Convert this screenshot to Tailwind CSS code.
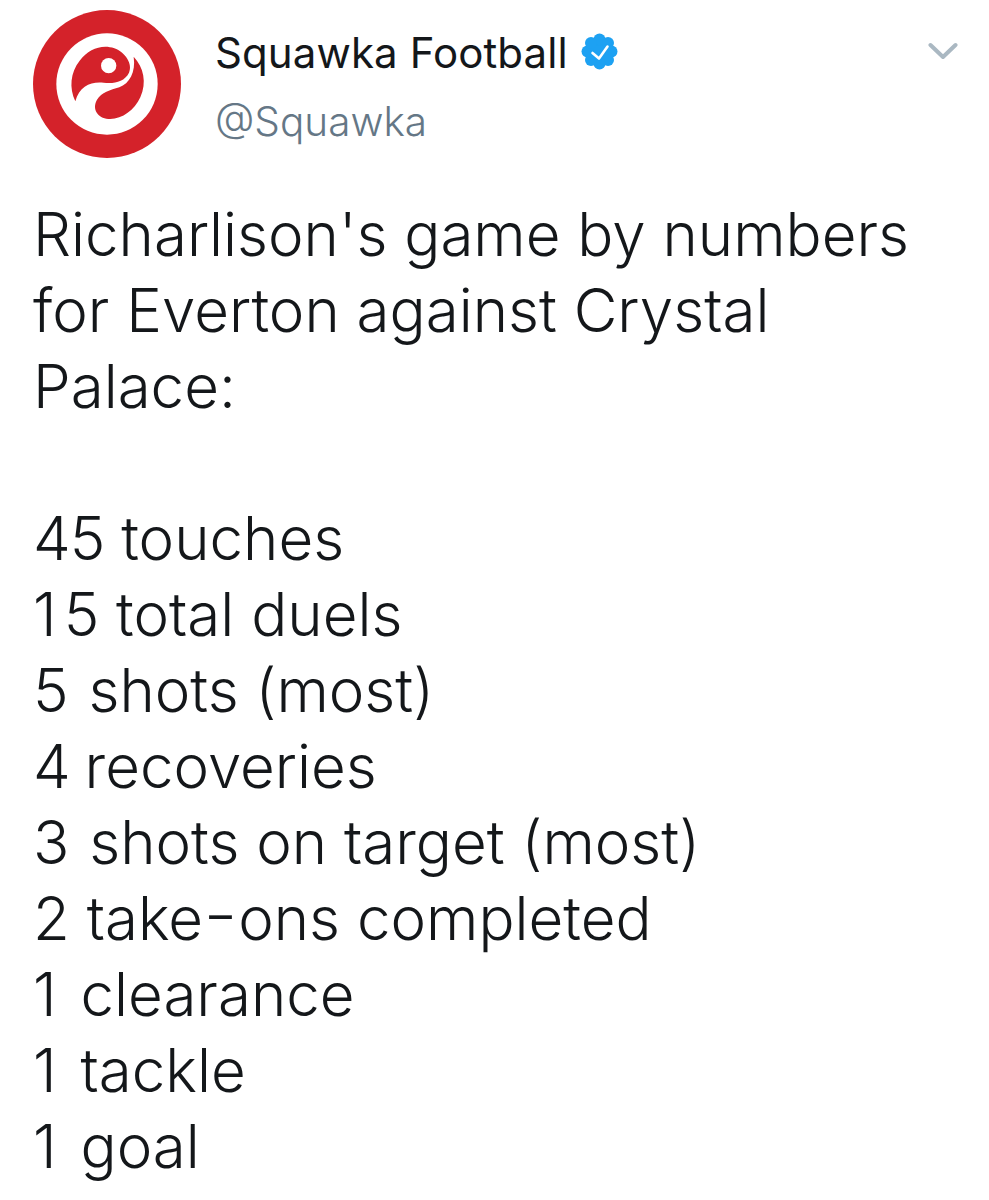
<!DOCTYPE html>
<html>
<head>
<meta charset="utf-8">
<script src="https://cdn.jsdelivr.net/npm/@tailwindcss/browser@4"></script>
</head>
<body class="bg-white">
<div class="w-[989px] h-[1200px] overflow-hidden bg-white text-[#14171a] font-['Inter',sans-serif] pt-[10px] pl-[33px]">
  <header class="flex items-start">
    <svg class="w-[148px] h-[148px] shrink-0" viewBox="38 28 444 444">
      <circle cx="260" cy="250" r="222" fill="#d4222a"/>
      <circle cx="260" cy="250" r="152" fill="#fff"/>
      <path d="M165 302C146 262 150 215 178 180C205 145 245 130 282 143C315 155 338 190 326 216C312 244 280 250 250 246C212 242 178 255 165 302Z" fill="#d4222a"/>
      <circle cx="265" cy="195" r="23" fill="#fff"/>
      <path d="M340 168C370 200 380 245 360 290C342 330 302 358 264 355C232 352 214 325 230 297C243 276 270 268 297 260C327 248 347 215 340 168Z" fill="#d4222a"/>
    </svg>
    <div class="ml-[34px] flex flex-col">
      <div class="flex items-center h-[44px] mt-[21px]">
        <span class="text-[42px] font-normal leading-[44px] tracking-[0.1px]">Squawka Football</span>
        <svg class="w-[37px] h-[37px] ml-[13px] -mt-[4px]" viewBox="0 0 37 37" fill="#1da1f2">
          <circle cx="18.5" cy="18.5" r="14"/>
          <circle cx="18.5" cy="6.5" r="6"/>
          <circle cx="27" cy="10" r="6"/>
          <circle cx="30.5" cy="18.5" r="6"/>
          <circle cx="27" cy="27" r="6"/>
          <circle cx="18.5" cy="30.5" r="6"/>
          <circle cx="10" cy="27" r="6"/>
          <circle cx="6.5" cy="18.5" r="6"/>
          <circle cx="10" cy="10" r="6"/>
          <path d="M11.5 20l6.5 5.5L26.5 13.5" fill="none" stroke="#fff" stroke-width="2.6" stroke-linecap="round" stroke-linejoin="round"/>
        </svg>
      </div>
      <span class="text-[40.5px] font-light text-[#657786] leading-[44px] mt-[25px]">@Squawka</span>
    </div>
    <svg class="w-[30px] h-[20px] ml-auto mr-[31px] mt-[31px]" viewBox="0 0 30 20">
      <path d="M2.5 4L15 16L27.5 4" fill="none" stroke="#aab8c2" stroke-width="4" stroke-linecap="round" stroke-linejoin="round"/>
    </svg>
  </header>
  <div class="mt-[38px] text-[60px] font-light leading-[76px] text-[#14171a]">
    <p>Richarlison's game by numbers</p>
    <p>for Everton against Crystal</p>
    <p>Palace:</p>
    <p>&nbsp;</p>
    <p><span class="tracking-[-1px]">45</span> touches</p>
    <p><span class="tracking-[7px]">1</span>5 total duels</p>
    <p><span class="tracking-[3px]">5</span> shots (most)</p>
    <p><span class="tracking-[-3px]">4</span> recoveries</p>
    <p><span class="tracking-[3px]">3</span> shots on target (most)</p>
    <p>2 take<span class="inline-block scale-x-125 mx-[4px] -translate-y-[4px]">-</span>ons completed</p>
    <p><span class="tracking-[7px]">1</span> clearance</p>
    <p><span class="tracking-[7px]">1</span> tackle</p>
    <p><span class="tracking-[7px]">1</span> goal</p>
  </div>
</div>
</body>
</html>
